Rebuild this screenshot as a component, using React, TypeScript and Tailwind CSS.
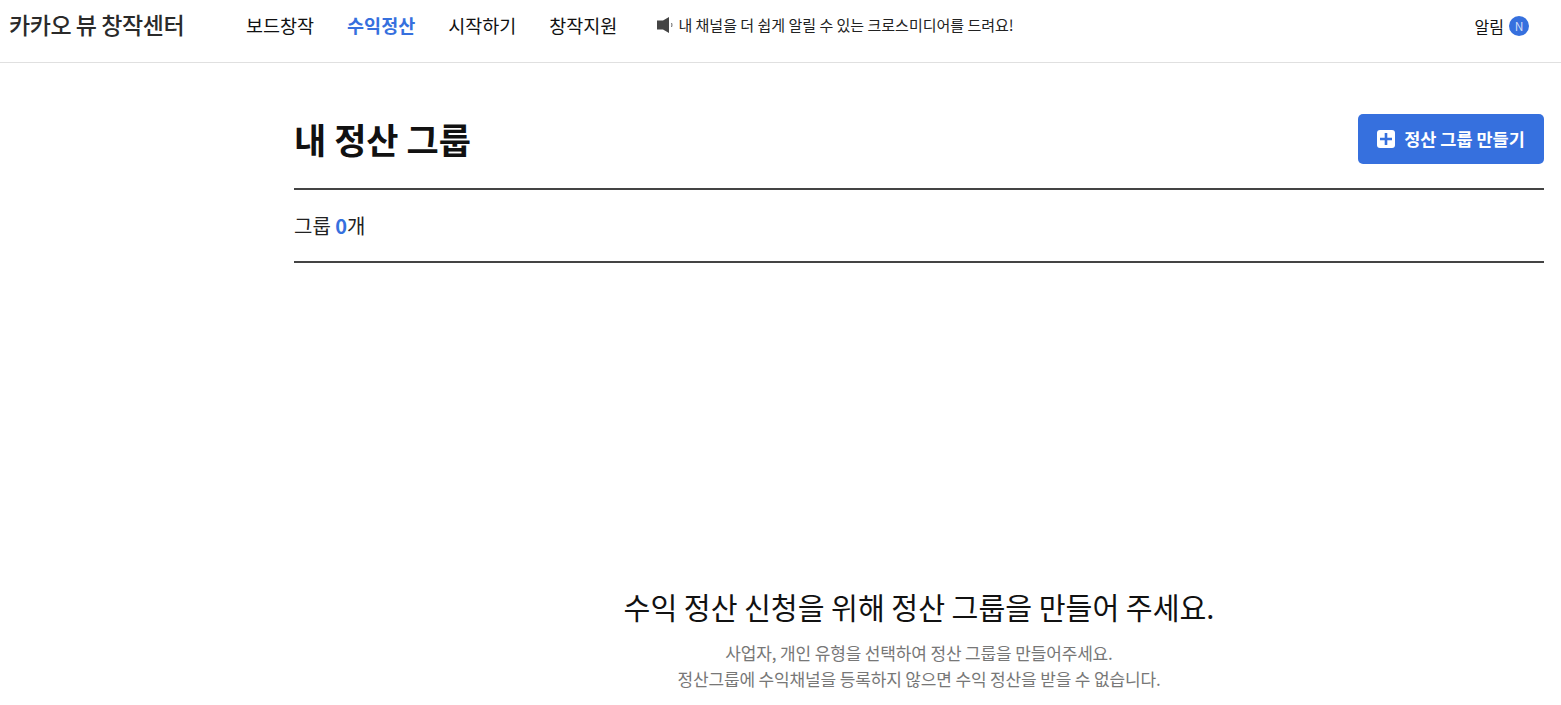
const fontStack = { fontFamily: '"Noto Sans CJK KR", "Noto Sans", sans-serif' }

const navItems = ['보드창작', '수익정산', '시작하기', '창작지원']

function Header() {
  return (
    <header className="flex h-[63px] items-start border-b border-[#e0e0e0] bg-white">
      <div className="ml-[9px] w-[237px] pt-[6px] text-[23px] leading-[36px] font-medium tracking-[-0.45px] text-[#2a2a2a]">
        카카오 뷰 창작센터
      </div>
      <nav className="flex gap-[33px] pt-[10px] text-[18.5px] leading-[30px] text-[#111]">
        {navItems.map((item) => (
          <a key={item} className={item === '수익정산' ? 'font-bold text-[#3670de]' : ''}>
            {item}
          </a>
        ))}
      </nav>
      <div className="ml-[39px] flex items-center gap-[3px] pt-[11px] text-[15px] leading-[28px] text-[#222]">
        <svg width="19" height="18" viewBox="0 0 19 18" className="shrink-0">
          <path d="M1 4.5h6l6-3.5v16l-6-3.5H1z" fill="#444" />
          <path d="M15.5 7c.6 1.2.6 2.8 0 4" stroke="#666" strokeWidth="1" fill="none" />
        </svg>
        <span>내 채널을 더 쉽게 알릴 수 있는 크로스미디어를 드려요!</span>
      </div>
      <div className="mr-[32px] ml-auto flex items-center gap-[5px] pt-[12px] text-[16px] leading-[28px] text-[#111]">
        <span>알림</span>
        <span className="flex h-5 w-5 items-center justify-center rounded-full bg-[#3670de] text-[12px] leading-none text-[#cfdcf7]">
          N
        </span>
      </div>
    </header>
  )
}

export default function App() {
  return (
    <div className="h-[705px] overflow-hidden bg-white" style={fontStack}>
      <Header />
      <main className="mr-[17px] ml-[294px]">
        <div className="flex h-[127px] items-start justify-between border-b-2 border-[#444]">
          <h1 className="pt-[50px] text-[35px] leading-[52px] font-bold text-[#111]">내 정산 그룹</h1>
          <button className="mt-[51px] flex h-[50px] w-[186px] items-center justify-center gap-[9px] rounded-[5px] bg-[#3670de] text-[17.5px] font-bold text-white">
            <svg width="18" height="18" viewBox="0 0 18 18">
              <rect width="18" height="18" rx="3" fill="#fff" />
              <path d="M9 3v12M3 9h12" stroke="#3670de" strokeWidth="2.6" />
            </svg>
            정산 그룹 만들기
          </button>
        </div>
        <div className="flex h-[73px] items-center border-b-2 border-[#444] text-[20px] text-[#222]">
          그룹&nbsp;<b className="font-bold text-[#3670de]">0</b>개
        </div>
        <section className="pt-[321px] text-center">
          <h2 className="text-[29.2px] leading-[44px] text-[#111]">수익 정산 신청을 위해 정산 그룹을 만들어 주세요.</h2>
          <p className="mt-[12px] text-[17px] leading-[26px] tracking-[-0.15px] text-[#777]">
            사업자, 개인 유형을 선택하여 정산 그룹을 만들어주세요.
            <br />
            정산그룹에 수익채널을 등록하지 않으면 수익 정산을 받을 수 없습니다.
          </p>
        </section>
      </main>
    </div>
  )
}
